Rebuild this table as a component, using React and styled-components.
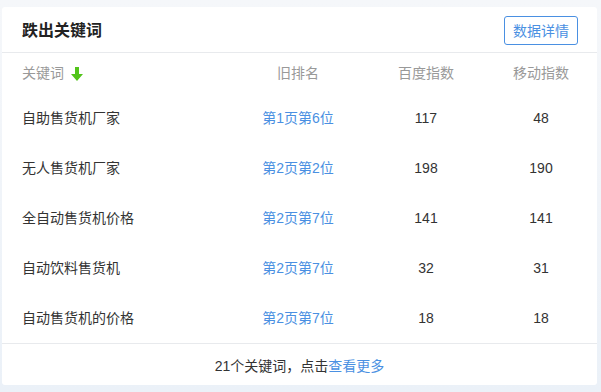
import React from "react";
import styled, { createGlobalStyle } from "styled-components";

const rows = [
  { keyword: "自助售货机厂家", rank: "第1页第6位", baidu: 117, mobile: 48 },
  { keyword: "无人售货机厂家", rank: "第2页第2位", baidu: 198, mobile: 190 },
  { keyword: "全自动售货机价格", rank: "第2页第7位", baidu: 141, mobile: 141 },
  { keyword: "自动饮料售货机", rank: "第2页第7位", baidu: 32, mobile: 31 },
  { keyword: "自动售货机的价格", rank: "第2页第7位", baidu: 18, mobile: 18 },
];

export default function App() {
  return (
    <>
      <GlobalStyle />
      <Page>
        <Card>
          <Header>
            <Title>跌出关键词</Title>
            <DetailButton>数据详情</DetailButton>
          </Header>
          <Table>
            <Row head>
              <Cell left>
                关键词
                <ArrowIcon />
              </Cell>
              <Cell>旧排名</Cell>
              <Cell>百度指数</Cell>
              <Cell>移动指数</Cell>
            </Row>
            {rows.map((r) => (
              <Row key={r.keyword}>
                <Cell left>{r.keyword}</Cell>
                <Cell link>{r.rank}</Cell>
                <Cell>{r.baidu}</Cell>
                <Cell>{r.mobile}</Cell>
              </Row>
            ))}
          </Table>
          <Footer>
            21个关键词，点击<MoreLink>查看更多</MoreLink>
          </Footer>
        </Card>
      </Page>
    </>
  );
}

function ArrowIcon() {
  return (
    <Arrow width="12" height="14" viewBox="0 0 12 14">
      <path d="M4 0h4v7h4l-6 7-6-7h4z" fill="#52c41a" />
    </Arrow>
  );
}

const GlobalStyle = createGlobalStyle`
  body {
    margin: 0;
    background: #eef3f9;
    font-family: "Liberation Sans", "Noto Sans CJK SC", sans-serif;
  }
`;

const Page = styled.div`
  width: 601px;
  height: 392px;
  padding: 7px 4px 0 2px;
  box-sizing: border-box;
  background: linear-gradient(to bottom, #f5f7fa, #ebf1f8);
`;

const Card = styled.div`
  background: #fff;
  border-radius: 3px;
  height: 378px;
  display: flex;
  flex-direction: column;
`;

const Header = styled.div`
  height: 45px;
  flex: none;
  display: flex;
  align-items: center;
  justify-content: space-between;
  padding: 0 19px 0 20px;
  border-bottom: 1px solid #e8eaed;
`;

const Title = styled.div`
  font-size: 16px;
  font-weight: bold;
  color: #222;
  margin-top: -1px;
`;

const DetailButton = styled.button`
  width: 74px;
  height: 29px;
  margin-top: 1px;
  border: 1px solid #4a90e2;
  border-radius: 3px;
  background: #fff;
  color: #4a90e2;
  font-family: inherit;
  font-size: 14px;
  padding: 0;
  cursor: pointer;
`;

const Table = styled.div`
  flex: none;
  padding: 0 9px 0 20px;
  border-bottom: 1px solid #e8eaed;
`;

const Row = styled.div`
  display: grid;
  grid-template-columns: 216px 120px 136px 1fr;
  height: ${(p) => (p.head ? "40px" : "50px")};
  align-items: center;
  color: ${(p) => (p.head ? "#999" : "#333")};
  font-size: 14px;
`;

const Cell = styled.div`
  display: flex;
  align-items: center;
  justify-content: ${(p) => (p.left ? "flex-start" : "center")};
  color: ${(p) => (p.link ? "#4a90e2" : "inherit")};
  line-height: 20px;
`;

const Arrow = styled.svg`
  margin-left: 7px;
  margin-top: 1px;
`;

const Footer = styled.div`
  flex: 1;
  display: flex;
  align-items: center;
  justify-content: center;
  font-size: 14px;
  color: #333;
`;

const MoreLink = styled.span`
  color: #4a90e2;
  cursor: pointer;
`;
